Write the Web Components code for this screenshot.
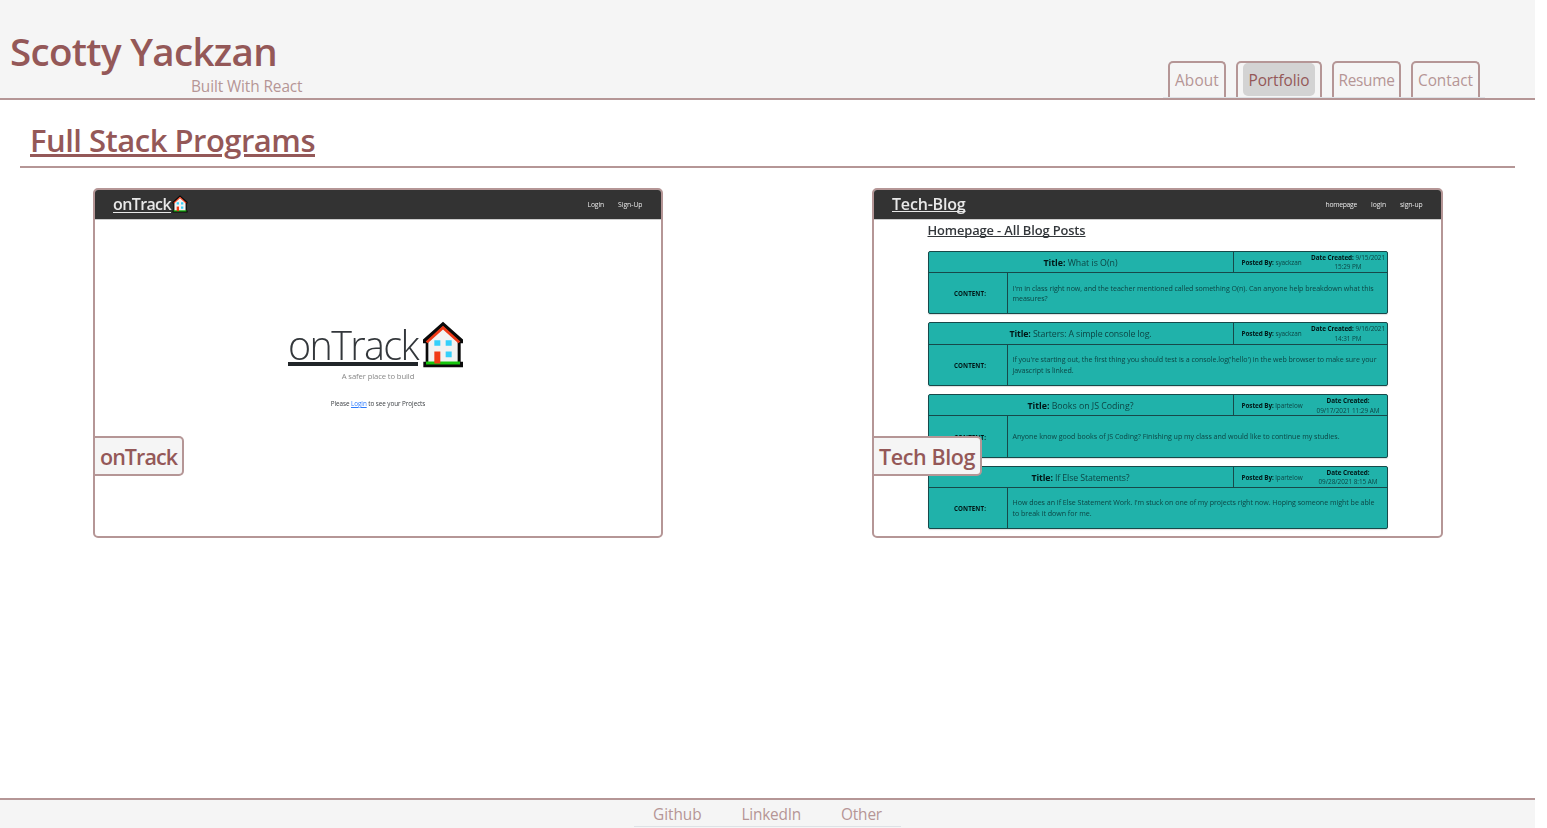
<!DOCTYPE html>
<html lang="en">
<head>
<meta charset="utf-8">
<title>Scotty Yackzan</title>
<style>
  html, body { margin: 0; height: 100%; background: #fff; overflow: hidden; }
  body { font-family: "Open Sans", "Noto Sans", sans-serif; }
</style>
</head>
<body>
<portfolio-page></portfolio-page>

<script>
const define = (name, html) => {
  const template = document.createElement('template');
  template.innerHTML = html;
  customElements.define(name, class extends HTMLElement {
    constructor() {
      super();
      this.attachShadow({ mode: 'open' }).append(template.content.cloneNode(true));
    }
  });
};

define('portfolio-page', `
  <style>
    :host { display: flex; flex-direction: column; width: 1535px; height: 828px; color: #945858; }
    main { flex: 1; padding: 20px 20px 0; }
    h2 { margin: 0; padding: 0 10px 6px; font-size: 31px; line-height: 40px; font-weight: 550; border-bottom: 2px solid #b59696; }
    h2 span { text-decoration: underline; text-decoration-thickness: 3px; text-underline-offset: 2px; }
    .cards { display: grid; grid-template-columns: 570px 571px; column-gap: 209px; padding: 20px 0 0 73px; }
  </style>
  <site-header></site-header>
  <main>
    <h2><fit-text w="285"><span>Full Stack Programs</span></fit-text></h2>
    <div class="cards">
      <project-card><track-preview></track-preview><fit-text slot="label" w="77">onTrack</fit-text></project-card>
      <project-card><blog-preview></blog-preview><fit-text slot="label" w="96">Tech Blog</fit-text></project-card>
    </div>
  </main>
  <site-footer></site-footer>
`);

define('site-header', `
  <style>
    :host { display: flex; justify-content: space-between; box-sizing: border-box; height: 100px;
            background: #f5f5f5; border-bottom: 2px solid #b59696; }
    .brand { padding: 30px 0 0 10px; }
    h1 { margin: 0; font-size: 38.5px; line-height: 43px; font-weight: 550; }
    p { margin: 2px 0 0 181px; font-size: 15.4px; line-height: 24px; color: #b59696; }
    nav { display: flex; align-self: flex-end; gap: 10px; padding: 0 5px; margin-right: 50px; border-bottom: 1px solid #dee2e6; }
  </style>
  <div class="brand">
    <h1><fit-text w="267">Scotty Yackzan</fit-text></h1>
    <p><fit-text w="111.5">Built With React</fit-text></p>
  </div>
  <nav>
    <nav-tab style="width:58px"><fit-text w="44">About</fit-text></nav-tab>
    <nav-tab active style="width:86px"><fit-text w="61">Portfolio</fit-text></nav-tab>
    <nav-tab style="width:69px"><fit-text w="56">Resume</fit-text></nav-tab>
    <nav-tab style="width:69px"><fit-text w="55">Contact</fit-text></nav-tab>
  </nav>
`);

define('nav-tab', `
  <style>
    :host { display: flex; justify-content: center; box-sizing: border-box; height: 36px; border: 2px solid #b59696;
            border-bottom: 0; border-radius: 5px 5px 0 0; font-size: 15.4px; line-height: 36px; color: #b59696; }
    span { height: 33px; border-radius: 5px; }
    :host([active]) span { background: lightgrey; color: #945858; padding: 0 5.5px; }
  </style>
  <span><slot></slot></span>
`);

define('site-footer', `
  <style>
    :host { display: flex; justify-content: center; box-sizing: border-box; height: 30px; background: #f5f5f5;
            border-top: 2px solid #b59696; font-size: 15.4px; line-height: 30px; color: #b59696; }
    nav { display: flex; gap: 40px; height: 26px; padding: 0 19px; border-bottom: 1px solid #dee2e6; }
  </style>
  <nav><fit-text w="48.5">Github</fit-text><fit-text w="59.5">LinkedIn</fit-text><fit-text w="41">Other</fit-text></nav>
`);

define('project-card', `
  <style>
    :host { display: block; position: relative; box-sizing: border-box; height: 350px; border: 2px solid #b59696;
            border-radius: 5px; overflow: hidden; background: #fff; }
    .label { position: absolute; left: 0; top: 246px; box-sizing: border-box; height: 40px; padding: 0 5px; background: #f5f5f5;
             border: 2px solid #b59696; border-left: 0; border-radius: 0 5px 5px 0; font-size: 21.5px; line-height: 38px; font-weight: 550; }
  </style>
  <slot></slot>
  <div class="label"><slot name="label"></slot></div>
`);

define('preview-bar', `
  <style>
    :host { display: flex; align-items: center; justify-content: space-between; height: 29px; padding: 0 18.5px 0 18px;
            background: #333; border-bottom: 1px solid #ccc; color: #e8e8e8; }
    .brand { display: flex; align-items: center; gap: 1px; font-size: 16px; line-height: 26px; height: 28px; margin-top: -1px; font-weight: 550; filter: blur(.3px); }
    .links { display: flex; gap: 14px; font-size: 6.8px; filter: blur(.3px); }
  </style>
  <div class="brand"><slot name="brand"></slot></div>
  <div class="links"><slot></slot></div>
`);

define('house-icon', `
  <style>:host { display: block; } svg { display: block; width: 100%; height: 100%; }</style>
  <svg viewBox="0 0 126 140">
    <path d="M63 2 L3 55 V66 H11 V122 H4 V138 H123 V122 H116 V66 H123 V55 Z" fill="#0a0a0a"/>
    <path d="M63 16 L19 57 V123 H107 V57 Z" fill="#f2f2f2"/>
    <path d="M63 14 L11 61 L17 66 L63 25 L109 66 L115 61 Z" fill="#f03a17"/>
    <path d="M12 121 H114 V130 H12 Z" fill="#16c60c"/>
    <path d="M37 57 H55 V74 H37 Z M71 57 H89 V74 H71 Z M71 91 H89 V108 H71 Z" fill="#35d0fb"/>
    <path d="M37 91 H55 V127 H37 Z" fill="#f03a17"/>
  </svg>
`);

define('track-preview', `
  <style>
    :host { display: block; color: #212529; }
    .u { text-decoration: underline; text-decoration-thickness: 1.3px; text-underline-offset: 1.5px; }
    .small { width: 16px; height: 17.8px; }
    .soft { display: block; filter: blur(.4px); }
    .hero { display: flex; gap: 4px; padding: 101.5px 0 0 193px; }
    .hero house-icon { width: 42px; height: 47px; margin-top: -.6px; }
    .word { font-size: 39.5px; line-height: 46px; font-weight: 300; color: #33373b; text-decoration: underline #212529; text-decoration-thickness: 4px;
            text-underline-offset: 2px; text-decoration-skip-ink: none; }
    p { margin: 0; text-align: center; }
    .tag { font-size: 7.7px; line-height: 12px; height: 12px; color: #888; }
    .login { font-size: 6.3px; line-height: 10px; height: 10px; padding: 17px 0 0; color: #3a3e42; }
    .hero fit-text { height: 48.5px; }
    a { color: #2c7bfd; text-decoration: underline; }
  </style>
  <preview-bar>
    <fit-text slot="brand" w="58"><span class="u">onTrack</span></fit-text><house-icon slot="brand" class="small"></house-icon>
    <fit-text w="16.5">Login</fit-text><fit-text w="24.5">Sign-Up</fit-text>
  </preview-bar>
  <div class="soft">
    <div class="hero"><fit-text w="130"><span class="word">onTrack</span></fit-text><house-icon></house-icon></div>
    <p class="tag"><fit-text w="72.5">A safer place to build</fit-text></p>
    <p class="login"><fit-text w="94.5">Please <a>Login</a> to see your Projects</fit-text></p>
  </div>
`);

define('blog-preview', `
  <style>
    :host { display: block; color: #212529; }
    .u { text-decoration: underline; text-decoration-thickness: 1.2px; text-underline-offset: 1px; text-decoration-skip-ink: none; }
    .body { padding: 0 53.5px; filter: blur(.35px); }
    h3 { margin: 0; font-size: 12.9px; line-height: 20px; height: 30.7px; font-weight: 550; color: #33373b; }
    .posts { display: grid; grid-auto-rows: 63.6px; row-gap: 8.05px; }
  </style>
  <preview-bar>
    <fit-text slot="brand" w="73.5"><span class="u">Tech-Blog</span></fit-text>
    <fit-text w="31.5">homepage</fit-text><fit-text w="15">login</fit-text><fit-text w="22.5">sign-up</fit-text>
  </preview-bar>
  <div class="body">
    <h3><fit-text w="158"><span class="u">Homepage - All Blog Posts</span></fit-text></h3>
    <div class="posts">
      <blog-post>
        <fit-text slot="title" w="74"><b>Title:</b> What is O(n)</fit-text>
        <fit-text slot="by" w="60"><b>Posted By:</b> syackzan</fit-text>
        <fit-text slot="date" w="74"><b>Date Created:</b> 9/15/2021</fit-text><fit-text slot="date" w="27">15:29 PM</fit-text>
        <fit-text w="361">I'm in class right now, and the teacher mentioned called something O(n). Can anyone help breakdown what this</fit-text>
        <fit-text w="35">measures?</fit-text>
      </blog-post>
      <blog-post>
        <fit-text slot="title" w="142"><b>Title:</b> Starters: A simple console log.</fit-text>
        <fit-text slot="by" w="60"><b>Posted By:</b> syackzan</fit-text>
        <fit-text slot="date" w="74"><b>Date Created:</b> 9/16/2021</fit-text><fit-text slot="date" w="27">14:31 PM</fit-text>
        <fit-text w="364">If you're starting out, the first thing you should test is a console.log('hello') in the web browser to make sure your</fit-text>
        <fit-text w="61">javascript is linked.</fit-text>
      </blog-post>
      <blog-post>
        <fit-text slot="title" w="106"><b>Title:</b> Books on JS Coding?</fit-text>
        <fit-text slot="by" w="61"><b>Posted By:</b> lpartelow</fit-text>
        <fit-text slot="date" w="43"><b>Date Created:</b></fit-text><fit-text slot="date" w="63">09/17/2021 11:29 AM</fit-text>
        <fit-text w="327">Anyone know good books of JS Coding? Finishing up my class and would like to continue my studies.</fit-text>
      </blog-post>
      <blog-post>
        <fit-text slot="title" w="98"><b>Title:</b> If Else Statements?</fit-text>
        <fit-text slot="by" w="61"><b>Posted By:</b> lpartelow</fit-text>
        <fit-text slot="date" w="43"><b>Date Created:</b></fit-text><fit-text slot="date" w="59">09/28/2021 8:15 AM</fit-text>
        <fit-text w="362">How does an If Else Statement Work. I'm stuck on one of my projects right now. Hoping someone might be able</fit-text>
        <fit-text w="79">to break it down for me.</fit-text>
      </blog-post>
    </div>
  </div>
`);

define('blog-post', `
  <style>
    :host { display: grid; grid-template-rows: 21.5px 1fr; box-sizing: border-box; border: 1px solid #17494a; border-radius: 2px;
            background: #20b2aa; color: #0c4544; box-shadow: 0 1px 1px #0002; }
    ::slotted(*) { display: block; }
    .top { display: grid; grid-template-columns: 1fr 154px; border-bottom: 1px solid #17494a; }
    .title { display: flex; justify-content: center; align-items: center; font-size: 8.8px; line-height: 20px; padding: 1px 0 0; }
    .meta { display: flex; justify-content: space-between; align-items: center; border-left: 1px solid #17494a; padding: .5px 1px 0 8px;
            font-size: 6.4px; line-height: 9.6px; }
    .date { display: flex; flex-direction: column; align-items: center; width: 75px; }
    .bottom { display: grid; grid-template-columns: 79px 1fr; }
    .cap { display: flex; justify-content: center; align-items: center; padding: 1px 0 0 5px; border-right: 1px solid #17494a; box-sizing: border-box;
           font-size: 6.2px; font-weight: 700; color: #001616; }
    .text { display: flex; flex-direction: column; justify-content: center; padding: 0 0 0 5px; font-size: 7.1px; line-height: 10.7px; }
  </style>
  <div class="top">
    <div class="title"><slot name="title"></slot></div>
    <div class="meta"><slot name="by"></slot><div class="date"><slot name="date"></slot></div></div>
  </div>
  <div class="bottom">
    <div class="cap"><fit-text w="32">CONTENT:</fit-text></div>
    <div class="text"><slot></slot></div>
  </div>
`);

/* Inline text tracked so that its run fills the width given in "w". */
customElements.define('fit-text', class extends HTMLElement {
  constructor() {
    super();
    this.attachShadow({ mode: 'open' }).innerHTML = `
      <style>
        :host { display: inline-block; white-space: nowrap; }
        ::slotted(b) { color: #001616; }
        span { display: inline-block; }
      </style><span><slot></slot></span>`;
  }
  connectedCallback() {
    const run = this.shadowRoot.querySelector('span');
    const natural = run.getBoundingClientRect().width;
    const count = this.textContent.length;
    const width = Number(this.getAttribute('w'));
    this.style.letterSpacing = ((width - natural) / count).toFixed(4) + 'px';
  }
});
</script>
</body>
</html>
